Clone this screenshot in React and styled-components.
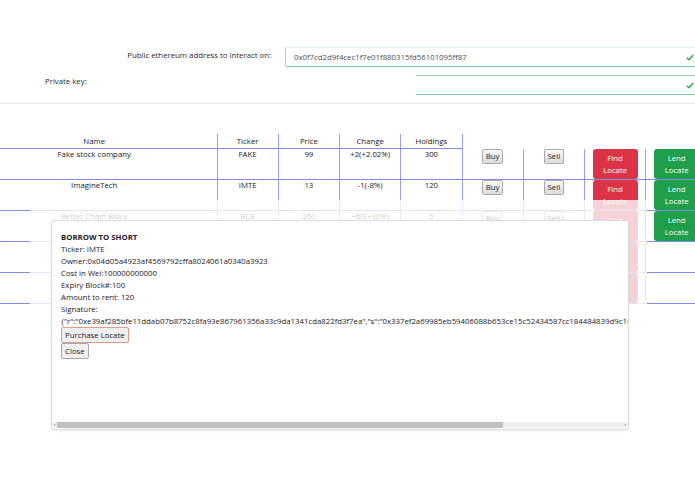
import React from "react";
import styled, { createGlobalStyle } from "styled-components";

const GlobalStyle = createGlobalStyle`
  html, body {
    margin: 0;
    padding: 0;
    overflow: hidden;
    background: #fff;
  }
  body {
    font-family: "Open Sans", "Noto Sans", sans-serif;
    font-size: 7.8px;
    line-height: 12px;
    color: #1d2024;
  }
`;

const Page = styled.div`
  position: relative;
  width: 695px;
  height: 494px;
  padding-top: 47px;
  box-sizing: border-box;
  overflow: hidden;
`;

const FormRow = styled.div`
  display: flex;
  align-items: flex-start;
  height: 20px;
  margin-bottom: 8px;
`;

const Label = styled.label`
  flex: none;
  box-sizing: border-box;
  width: ${(p) => p.$w}px;
  padding-top: ${(p) => p.$pt || 0}px;
  padding-left: ${(p) => p.$pl || 0}px;
  padding-right: ${(p) => p.$pr || 0}px;
  text-align: ${(p) => p.$align || "left"};
  color: #2a2a2a;
`;

const Field = styled.div`
  position: relative;
  flex: none;
  width: ${(p) => p.$w}px;
  height: 20px;
`;

const Input = styled.input`
  box-sizing: border-box;
  width: 100%;
  height: 100%;
  padding: 0 8px;
  font: inherit;
  color: #495057;
  background: #fff;
  outline: none;
  border: 1px solid transparent;
  border-top-color: ${(p) => (p.$top ? "#9ed5ad" : "#e3f3e7")};
  border-left-color: ${(p) => (p.$left ? "#a7d9b4" : "transparent")};
  border-bottom-color: #86cc99;
  border-right: none;
  border-radius: 2px;
`;

const Check = styled.svg`
  position: absolute;
  right: 3px;
  top: 7px;
`;

const Rule = styled.hr`
  margin: 0;
  border: none;
  border-top: 1px solid #e7e7e7;
`;

const TableWrap = styled.div`
  margin-top: 30px;
`;

const Table = styled.table`
  width: 707px;
  table-layout: fixed;
  border-collapse: collapse;
`;

const Th = styled.th`
  font-weight: normal;
  padding: 1px 0;
  padding-right: ${(p) => p.$pr || 0}px;
  line-height: 12px;
  text-align: center;
  border-right: 1px solid #94a1eb;
  border-bottom: 1px solid #7e8ee6;
`;

const Td = styled.td`
  height: 30px;
  padding: 0;
  padding-right: ${(p) => p.$pr || 0}px;
  vertical-align: top;
  text-align: center;
  line-height: 12px;
  border-right: ${(p) => (p.$last ? "none" : "1px solid #94a1eb")};
  border-bottom: 1px solid #7e8ee6;
`;

const CellText = styled.div`
  margin-top: -1px;
`;

const SmallBtn = styled.button`
  font: inherit;
  line-height: 11px;
  color: #222;
  padding: 1px 3px;
  background: linear-gradient(#f8f8f8, #dcdcdc);
  border: 1px solid ${(p) => p.$border || "#a9a9a9"};
  border-radius: 2px;
`;

const LocateBtn = styled.button`
  display: block;
  margin: 0 auto;
  width: 45px;
  height: 30px;
  font: inherit;
  line-height: 12px;
  color: #fff;
  padding: 3px 0;
  border: none;
  border-radius: 3px;
  background: ${(p) => (p.$green ? "#1f9e4b" : "#dc3346")};
`;

const Fade = styled.div`
  position: absolute;
  left: 30px;
  top: 200px;
  width: 617px;
  height: 106px;
  background: rgba(255, 255, 255, 0.78);
`;

const Modal = styled.div`
  position: absolute;
  left: 51px;
  top: 220px;
  width: 578px;
  height: 210px;
  box-sizing: border-box;
  display: flex;
  flex-direction: column;
  background: #fff;
  border: 1px solid #dcdcdc;
  border-radius: 3px;
  box-shadow: 0 1px 3px rgba(0, 0, 0, 0.08);
  overflow: hidden;
`;

const Scroller = styled.div`
  flex: 1;
  min-height: 0;
  padding: 10px 0 0 9px;
  overflow: hidden;
`;

const ScrollBar = styled.div`
  flex: none;
  display: flex;
  align-items: center;
  height: 6px;
  margin-bottom: 1px;
  background: #f1f1f1;
`;

const Arrow = styled.svg`
  flex: none;
  width: 5px;
  height: 6px;
`;

const Track = styled.div`
  flex: 1;
  height: 100%;
`;

const Thumb = styled.div`
  height: 100%;
  background: #c1c1c1;
`;

const Title = styled.div`
  font-weight: bold;
`;

const Line = styled.div`
  white-space: nowrap;
`;

const ModalBtn = styled(SmallBtn)`
  display: block;
  line-height: 12px;
  background: #efefef;
`;

// the last two rows sit under the dialog, only their locate buttons show
const stocks = [
  { id: 1, name: "Fake stock company", ticker: "FAKE", price: 99, change: "+2(+2.02%)", holdings: 300, lend: true },
  { id: 2, name: "ImagineTech", ticker: "IMTE", price: 13, change: "-1(-8%)", holdings: 120, lend: true },
  { id: 3, name: "Better Chain Block", ticker: "BCB", price: 260, change: "+60(+30%)", holdings: 5, lend: true },
  { id: 4, hidden: true },
  { id: 5, hidden: true },
];

const signature =
  '{"r":"0xe39af285bfe11ddab07b8752c8fa93e867961356a33c9da1341cda822fd3f7ea","s":"0x337ef2a69985eb59406088b653ce15c52434587cc184484839d9c1f0a7e2b45d","v":"0x1c"}';

function CheckIcon() {
  return (
    <Check width="8" height="7" viewBox="0 0 8 7">
      <path d="M0.8 3.8 L3 5.8 L7.2 1" fill="none" stroke="#28a745" strokeWidth="1.4" />
    </Check>
  );
}

function App() {
  return (
    <Page>
      <GlobalStyle />
      <FormRow>
        <Label $w={285} $pr={14} $pt={2} $align="right">
          Public ethereum address to interact on:
        </Label>
        <Field $w={412}>
          <Input $left defaultValue="0x0f7cd2d9f4cec1f7e01f880315fd56101095ff87" />
          <CheckIcon />
        </Field>
      </FormRow>
      <FormRow>
        <Label $w={415} $pl={45} $pt={0}>
          Private key:
        </Label>
        <Field $w={282}>
          <Input $top type="password" defaultValue="" />
          <CheckIcon />
        </Field>
      </FormRow>
      <Rule />

      <TableWrap>
        <Table>
          <colgroup>
            <col style={{ width: 217 }} />
            {Array.from({ length: 8 }).map((_, i) => (
              <col key={i} />
            ))}
          </colgroup>
          <thead>
            <tr>
              <Th $pr={28}>Name</Th>
              <Th>Ticker</Th>
              <Th>Price</Th>
              <Th>Change</Th>
              <Th>Holdings</Th>
            </tr>
          </thead>
          <tbody>
            {stocks.map((s) => (
              <tr key={s.id}>
                <Td $pr={28}>
                  <CellText>{s.name}</CellText>
                </Td>
                <Td>
                  <CellText>{s.ticker}</CellText>
                </Td>
                <Td>
                  <CellText>{s.price}</CellText>
                </Td>
                <Td>
                  <CellText>{s.change}</CellText>
                </Td>
                <Td>
                  <CellText>{s.holdings}</CellText>
                </Td>
                <Td>{!s.hidden && <SmallBtn>Buy</SmallBtn>}</Td>
                <Td>{!s.hidden && <SmallBtn>Sell</SmallBtn>}</Td>
                <Td>
                  <LocateBtn>
                    {!s.hidden && (
                      <>
                        Find
                        <br />
                        Locate
                      </>
                    )}
                  </LocateBtn>
                </Td>
                <Td $last>
                  {s.lend && (
                    <LocateBtn $green>
                      Lend
                      <br />
                      Locate
                    </LocateBtn>
                  )}
                </Td>
              </tr>
            ))}
          </tbody>
        </Table>
      </TableWrap>

      <Fade />

      <Modal>
        <Scroller>
          <Title>BORROW TO SHORT</Title>
          <Line>Ticker: IMTE</Line>
          <Line>Owner:0x04d05a4923af4569792cffa8024061a0340a3923</Line>
          <Line>Cost in Wei:100000000000</Line>
          <Line>Expiry Block#:100</Line>
          <Line>Amount to rent: 120</Line>
          <Line>Signature:</Line>
          <Line>{signature}</Line>
          <ModalBtn $border="#e39a88">Purchase Locate</ModalBtn>
          <ModalBtn>Close</ModalBtn>
        </Scroller>
        <ScrollBar>
          <Arrow viewBox="0 0 5 6">
            <path d="M3.2 1.5 L1.6 3 L3.2 4.5 Z" fill="#a3a3a3" />
          </Arrow>
          <Track>
            <Thumb style={{ width: `${(445 / 565) * 100}%` }} />
          </Track>
          <Arrow viewBox="0 0 5 6">
            <path d="M1.8 1.5 L3.4 3 L1.8 4.5 Z" fill="#a3a3a3" />
          </Arrow>
        </ScrollBar>
      </Modal>
    </Page>
  );
}

export default App;
